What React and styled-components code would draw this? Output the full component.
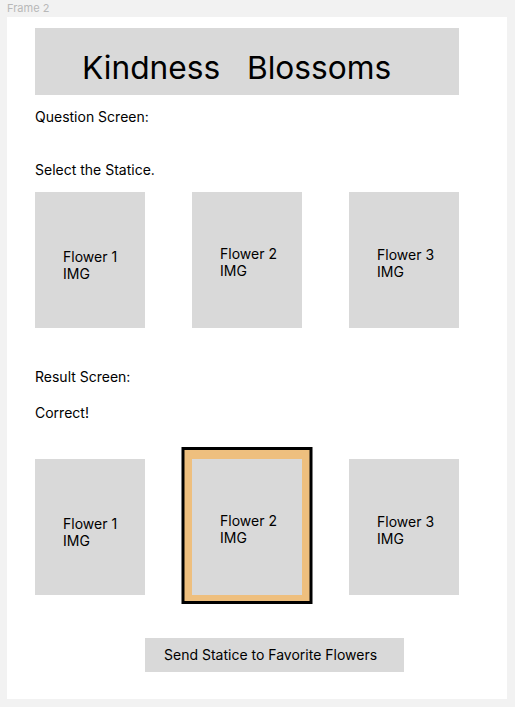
import React from 'react';
import styled, {createGlobalStyle} from 'styled-components';

const GlobalStyle = createGlobalStyle`
    body {
        margin: 0;
        background: #f2f2f2;
        font-family: Inter, "Noto Sans", sans-serif;
        color: #000;
    }
`;

const questionCards = [
    {id: 1, pad: 56},
    {id: 2, pad: 53},
    {id: 3, pad: 54},
];

const resultCards = [
    {id: 1, pad: 56},
    {id: 2, pad: 53, selected: true},
    {id: 3, pad: 54},
];

export default function App() {
    return (
        <>
            <GlobalStyle/>
            <FrameLabel>Frame 2</FrameLabel>
            <Frame>
                <Header>{'Kindness   Blossoms'}</Header>

                <Label top={13}>Question Screen:</Label>
                <Label top={36}>Select the Statice.</Label>
                <CardRow top={14}>
                    {questionCards.map(card => (
                        <Card key={card.id} pad={card.pad}>
                            Flower {card.id}<br/>IMG
                        </Card>
                    ))}
                </CardRow>

                <Label top={40}>Result Screen:</Label>
                <Label top={19}>Correct!</Label>
                <CardRow top={38}>
                    {resultCards.map(card => (
                        <Card key={card.id} pad={card.pad} selected={card.selected}>
                            Flower {card.id}<br/>IMG
                        </Card>
                    ))}
                </CardRow>

                <ButtonRow>
                    <SendButton>Send Statice to Favorite Flowers</SendButton>
                </ButtonRow>
            </Frame>
        </>
    );
}

const FrameLabel = styled.div`
    height: 17px;
    padding-left: 7px;
    font-size: 11px;
    line-height: 17px;
    color: #b8b8b8;
`;

const Frame = styled.div`
    width: 500px;
    height: 682px;
    margin-left: 7px;
    padding: 11px 0 0 28px;
    box-sizing: border-box;
    background: #fff;
`;

const Header = styled.div`
    width: 424px;
    height: 67px;
    box-sizing: border-box;
    padding: 20px 0 0 47px;
    background: #d9d9d9;
    font-size: 31.7px;
    line-height: 39px;
    white-space: pre;
`;

const Label = styled.div`
    margin-top: ${props => props.top}px;
    font-size: 14px;
    line-height: 17px;
`;

const CardRow = styled.div`
    display: flex;
    gap: 47px;
    margin-top: ${props => props.top}px;
`;

const Card = styled.div`
    width: 110px;
    height: 136px;
    box-sizing: border-box;
    padding: ${props => props.pad}px 0 0 28px;
    background: #d9d9d9;
    font-size: 14px;
    line-height: 17px;
    box-shadow: ${props => props.selected
        ? '0 -1.5px 0 7.5px #eebf7e, 0 -1.5px 0 10.5px #000'
        : 'none'};
`;

const ButtonRow = styled.div`
    display: flex;
    margin-top: 43px;
    padding-left: 110px;
`;

const SendButton = styled.button`
    width: 259px;
    height: 34px;
    padding: 0 0 1px 19px;
    border: none;
    border-radius: 0;
    background: #d9d9d9;
    font-family: Inter, "Noto Sans", sans-serif;
    font-size: 14px;
    color: #000;
    text-align: left;
`;
